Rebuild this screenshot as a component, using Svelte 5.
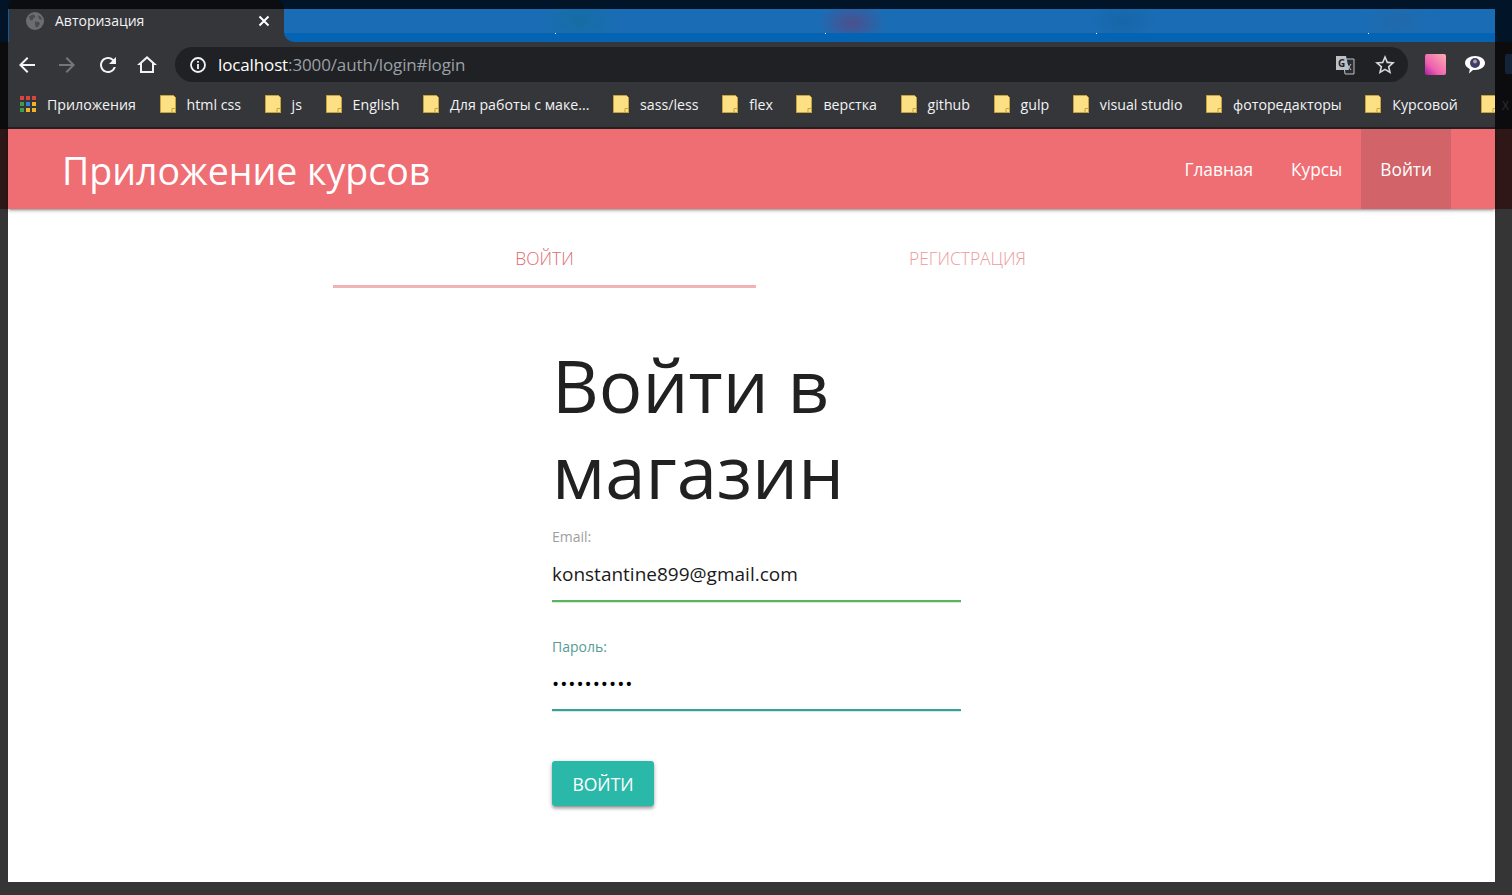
<script>
  const bookmarks = [
    { label: 'html css' },
    { label: 'js' },
    { label: 'English' },
    { label: 'Для работы с маке...' },
    { label: 'sass/less' },
    { label: 'flex' },
    { label: 'верстка' },
    { label: 'github' },
    { label: 'gulp' },
    { label: 'visual studio' },
    { label: 'фоторедакторы' },
    { label: 'Курсовой' }
  ];
  const appColors = ['#d9453c', '#d9453c', '#d9453c', '#3f9b4f', '#2f7fd8', '#f0b429', '#3f9b4f', '#f0b429', '#f0b429'];
</script>

{#snippet folder()}
  <svg class="folder" width="16" height="18" viewBox="0 0 16 18">
    <path d="M.5.5h13l2 2v15H.5z" fill="#fde083" stroke="#c8a23c" />
    <path d="M12 17.500v-4h3.500v4z" fill="#fde083" stroke="#c8a23c" />
  </svg>
{/snippet}

<div class="shell">
  <div class="top-edge"></div>

  <div class="window">
    <div class="tabstrip">
      <div class="tab">
        <svg class="globe" width="18" height="18" viewBox="0 0 18 18">
          <circle cx="9" cy="9" r="9" fill="#6b6d72" />
          <path d="M3 4.500c2-1.500 4-2 5.500-1.500l1 2-2.500 1.500-.5 2-2.500-.5zM9 9.500l4 .5 1 2-3 3.500-1.500-.5-.5-3zM12 3l3 2 1 3-3-1z" fill="#4a4b50" />
        </svg>
        <span class="tab-title">Авторизация</span>
        <svg class="tab-close" width="12" height="12" viewBox="0 0 12 12">
          <path d="M1.500 1.500l9 9M10.500 1.500l-9 9" stroke="#fff" stroke-width="2" />
        </svg>
      </div>
      <div class="blurred-tabs"></div>
    </div>

    <div class="toolbar">
      <svg class="tool back" width="24" height="24" viewBox="0 0 24 24" fill="#f1f3f4"><path d="M20 11H7.830l5.590-5.590L12 4l-8 8 8 8 1.410-1.410L7.830 13H20v-2z" /></svg>
      <svg class="tool forward" width="24" height="24" viewBox="0 0 24 24" fill="#74767a"><path d="M4 11h12.170l-5.590-5.590L12 4l8 8-8 8-1.410-1.410L16.170 13H4v-2z" /></svg>
      <svg class="tool reload" width="24" height="24" viewBox="0 0 24 24" fill="#f1f3f4"><path d="M17.650 6.350A7.958 7.958 0 0 0 12 4c-4.420 0-7.990 3.580-7.990 8s3.570 8 7.990 8c3.730 0 6.840-2.550 7.730-6h-2.080A5.990 5.990 0 0 1 12 18c-3.310 0-6-2.690-6-6s2.690-6 6-6c1.660 0 3.140.69 4.220 1.780L13 11h7V4l-2.350 2.350z" /></svg>
      <svg class="tool home" width="24" height="24" viewBox="0 0 24 24" fill="#f1f3f4"><path d="M12 5.700l5 4.500V18H7v-7.800l5-4.500M12 3L2 12h3v8h14v-8h3L12 3z" /></svg>

      <div class="omnibox">
        <svg class="info" width="18" height="18" viewBox="0 0 18 18">
          <circle cx="9" cy="9" r="7" fill="none" stroke="#f1f3f4" stroke-width="1.800" />
          <path d="M8.100 8h1.800v5H8.100zM8.100 5h1.800v1.800H8.100z" fill="#f1f3f4" />
        </svg>
        <span class="url"><span class="host">localhost</span>:3000/auth/login#login</span>
        <span class="spacer"></span>
        <svg class="translate" width="20" height="20" viewBox="0 0 20 20">
          <path d="M8 4h11v15H10z" fill="#2c2d30" stroke="#bdc1c6" />
          <path d="M1 1h10l3 14H1z" fill="#bdc1c6" />
          <text x="3" y="12" class="translate-g">G</text>
          <path d="M12 9l4 6M16 9l-4 6" stroke="#bdc1c6" stroke-width="1" />
        </svg>
        <svg class="star" width="24" height="24" viewBox="0 0 24 24" fill="#d6d8db"><path d="M22 9.240l-7.190-.62L12 2 9.190 8.630 2 9.240l5.460 4.730L5.820 21 12 17.270 18.180 21l-1.630-7.030L22 9.240zM12 15.400l-3.760 2.270 1-4.280-3.320-2.880 4.380-.38L12 6.100l1.710 4.040 4.380.38-3.320 2.880 1 4.280L12 15.400z" /></svg>
      </div>

      <div class="ext-pink"></div>
      <svg class="ext-bubble" width="20" height="18" viewBox="0 0 20 18">
        <path d="M10 0c5.500 0 10 2.900 10 7s-4.500 7-10 7c-.7 0-1.300 0-2-.1L4 17.500l.8-4.600C2 11.700 0 9.600 0 7c0-4.100 4.500-7 10-7z" fill="#fff" />
        <circle cx="10" cy="7" r="5" fill="#3c3f66" />
        <circle cx="10" cy="5.500" r="1.900" fill="#b9a0a6" />
      </svg>
    </div>

    <div class="bookmarks">
      <span class="bookmark apps">
        <span class="apps-grid">
          {#each appColors as color}
            <i style="background: {color}"></i>
          {/each}
        </span>
        Приложения
      </span>
      {#each bookmarks as item}
        <span class="bookmark">
          {@render folder()}
          {item.label}
        </span>
      {/each}
      <span class="bookmark">{@render folder()}</span>
    </div>

    <nav class="navbar">
      <span class="brand">Приложение курсов</span>
      <ul class="nav-links">
        <li>Главная</li>
        <li>Курсы</li>
        <li class="active">Войти</li>
      </ul>
    </nav>

    <main class="page">
      <div class="container">
        <div class="tabs">
          <div class="page-tab selected">ВОЙТИ</div>
          <div class="page-tab">РЕГИСТРАЦИЯ</div>
        </div>

        <form class="login" on:submit|preventDefault>
          <h1>Войти в магазин</h1>
          <label class="field valid">
            <span>Email:</span>
            <input type="email" value="konstantine899@gmail.com" />
          </label>
          <label class="field focused">
            <span>Пароль:</span>
            <input type="password" value="1234567890" />
          </label>
          <button type="submit">ВОЙТИ</button>
        </form>
      </div>
    </main>
  </div>

  <!-- the next window peeking out behind the browser -->
  <span class="behind-icon"></span>
  <span class="behind-text">X</span>
</div>

<style>
  :global(body) {
    margin: 0;
    background: #353535;
  }

  .shell {
    box-sizing: border-box;
    width: 1512px;
    height: 895px;
    padding: 0 17px 13px 8px;
    display: flex;
    flex-direction: column;
    overflow: hidden;
    position: relative;
    font-family: "Open Sans", "Noto Sans", sans-serif;
    background: linear-gradient(to bottom, #021528 0 42px, #0c0c0e 42px 129px, #2f1718 129px 209px, #353535 209px);
  }

  .behind-icon {
    position: absolute;
    left: 1505px;
    top: 54px;
    width: 7px;
    height: 20px;
    border-radius: 2px 0 0 2px;
    background: #12233a;
  }

  .behind-text {
    position: absolute;
    left: 1502px;
    top: 97px;
    font-size: 12px;
    color: #2e2e2e;
  }

  .top-edge {
    flex: none;
    width: 276px;
    height: 9px;
    background: #0b0d10;
    border-radius: 8px 8px 0 0;
  }

  .window {
    flex: 1;
    display: flex;
    flex-direction: column;
    min-height: 0;
  }

  .tabstrip {
    flex: none;
    height: 33px;
    display: flex;
    background: #35363a;
  }

  .tab {
    box-sizing: border-box;
    width: 276px;
    display: flex;
    align-items: center;
    padding: 0 14px 10px 17px;
    border-left: 1px solid #155a9c;
    color: #f1f3f4;
    font-size: 14px;
  }

  .tab-title {
    flex: 1;
    margin-left: 11px;
  }

  .blurred-tabs {
    flex: 1;
    border-bottom-left-radius: 10px;
    background:
      linear-gradient(#e8eef5, #e8eef5) 271px 24px / 1px 1px no-repeat,
      linear-gradient(#e8eef5, #e8eef5) 541px 24px / 1px 1px no-repeat,
      linear-gradient(#e8eef5, #e8eef5) 812px 24px / 1px 1px no-repeat,
      linear-gradient(#e8eef5, #e8eef5) 1084px 24px / 1px 1px no-repeat,
      linear-gradient(to bottom, transparent 24px, #0563b3 24px),
      radial-gradient(ellipse 40px 22px at 295px 12px, rgba(15, 110, 140, .45), transparent),
      radial-gradient(ellipse 34px 22px at 568px 14px, rgba(110, 60, 115, .6), transparent),
      radial-gradient(ellipse 36px 22px at 839px 12px, rgba(15, 90, 150, .4), transparent),
      radial-gradient(ellipse 36px 22px at 1113px 12px, rgba(50, 95, 150, .3), transparent),
      #1a6db5;
  }

  .toolbar {
    flex: none;
    box-sizing: border-box;
    height: 46px;
    padding-bottom: 1px;
    display: flex;
    align-items: center;
    background: #35363a;
  }

  .tool {
    flex: none;
    margin-right: 16px;
  }

  .back {
    margin-left: 7px;
  }

  .forward {
    margin-right: 17px;
  }

  .reload {
    margin-right: 15px;
  }

  .omnibox {
    flex: none;
    box-sizing: border-box;
    width: 1233px;
    height: 35px;
    padding: 0 11px 0 14px;
    display: flex;
    align-items: center;
    border-radius: 18px;
    background: #202124;
  }

  .url {
    margin-left: 11px;
    color: #9aa0a6;
    font-size: 17px;
    letter-spacing: -.13px;
    white-space: nowrap;
  }

  .host {
    color: #fff;
  }

  .spacer {
    flex: 1;
  }

  .translate-g {
    font: bold 10px "Open Sans", sans-serif;
    fill: #202124;
  }

  .translate {
    margin-right: 18px;
  }

  .ext-pink {
    flex: none;
    width: 21px;
    height: 21px;
    margin-left: 17px;
    border-radius: 2px;
    background: linear-gradient(45deg, #a81fa0 0%, #f05fb0 35%, #fbb0b0 100%);
  }

  .ext-bubble {
    flex: none;
    margin-left: 19px;
  }

  .bookmarks {
    flex: none;
    box-sizing: border-box;
    height: 41px;
    display: flex;
    align-items: center;
    gap: 23.600px;
    padding: 0 0 7px 12px;
    overflow: hidden;
    background: #35363a;
    border-bottom: 2px solid #232326;
    color: #f1f3f4;
    font-size: 14.200px;
    white-space: nowrap;
  }

  .bookmark {
    flex: none;
    display: flex;
    align-items: center;
    gap: 11px;
  }

  .apps-grid {
    display: grid;
    grid-template-columns: repeat(3, 4px);
    gap: 2px;
  }

  .apps-grid i {
    display: block;
    height: 4px;
  }

  .folder {
    flex: none;
    display: block;
  }

  .navbar {
    flex: none;
    height: 80px;
    display: flex;
    align-items: stretch;
    justify-content: space-between;
    padding: 0 44px 0 54px;
    background: #ef6e73;
    color: #fff;
    position: relative;
    box-shadow: 0 2px 2px 0 rgba(0, 0, 0, .14), 0 3px 1px -2px rgba(0, 0, 0, .12), 0 1px 5px 0 rgba(0, 0, 0, .2);
  }

  .brand {
    align-self: center;
    padding-top: 2px;
    font-size: 37.500px;
  }

  .nav-links {
    display: flex;
    margin: 0;
    padding: 0;
    list-style: none;
    font-size: 17.300px;
  }

  .nav-links li {
    display: flex;
    align-items: center;
    padding: 0 19px;
  }

  .nav-links .active {
    background: #d26368;
  }

  .page {
    flex: 1;
    background: #fff;
    padding-left: 325px;
  }

  .container {
    width: 846px;
  }

  .tabs {
    display: flex;
    height: 79px;
  }

  .page-tab {
    box-sizing: border-box;
    width: 423px;
    padding-top: 37px;
    text-align: center;
    font-size: 17.400px;
    font-weight: 300;
    color: #ec9a9d;
  }

  .selected {
    color: #e06a6e;
    border-bottom: 3px solid #f2b3b7;
  }

  .login {
    width: 409px;
    margin-left: 219px;
    display: flex;
    flex-direction: column;
    align-items: flex-start;
  }

  h1 {
    margin: 54px 0 14px;
    font-size: 72.500px;
    font-weight: 400;
    line-height: 86px;
    color: #212121;
  }

  .field {
    display: flex;
    flex-direction: column;
    width: 100%;
  }

  .field + .field {
    margin-top: 36px;
  }

  .field span {
    height: 18px;
    line-height: 18px;
    font-size: 14px;
    color: #9e9e9e;
  }

  .field input {
    box-sizing: border-box;
    height: 56px;
    padding: 2px 0 0;
    border: none;
    border-bottom: 2px solid #9e9e9e;
    outline: none;
    font-family: inherit;
    font-size: 19px;
    color: #1a1a1a;
    background: transparent;
  }

  .valid input {
    border-bottom-color: #5ab45e;
    box-shadow: 0 1px 0 #d5ecd6;
  }

  .focused span {
    color: #559c96;
  }

  .focused input {
    height: 55px;
    padding-top: 3px;
    letter-spacing: 1px;
    border-bottom-color: #3f9d94;
    box-shadow: 0 1px 0 #c8efe9;
    color: #000;
  }

  button {
    margin-top: 50px;
    width: 102px;
    height: 45px;
    padding: 0;
    border: none;
    border-radius: 3px;
    background: #2ab9a9;
    color: #fff;
    font-family: inherit;
    font-size: 17.500px;
    box-shadow: 0 3px 3px 0 rgba(0, 0, 0, .22), 0 3px 1px -2px rgba(0, 0, 0, .12), 0 1px 5px 0 rgba(0, 0, 0, .2);
  }
</style>
